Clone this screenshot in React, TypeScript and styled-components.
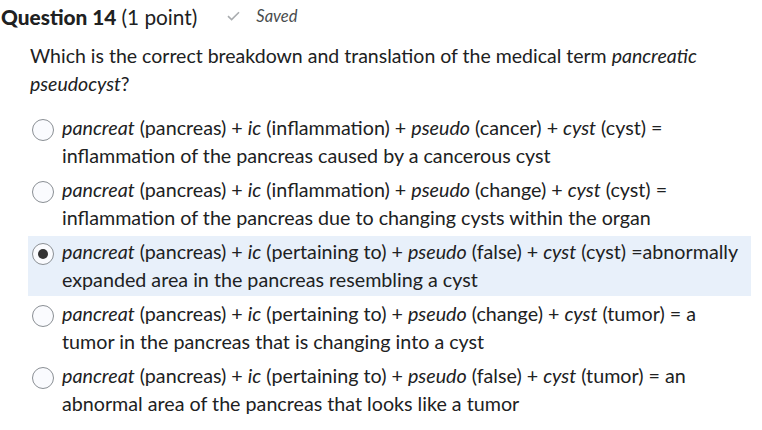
import React from 'react';
import styled, { createGlobalStyle } from 'styled-components';

const GlobalStyle = createGlobalStyle`
  body {
    margin: 0;
    background: #ffffff;
    font-family: Lato, "Open Sans", sans-serif;
    color: #202122;
  }
`

const Page = styled.div`
  padding: 2px 0 0 1px;
`

const Header = styled.div`
  display: flex;
  align-items: center;
  height: 28px;
`

const Title = styled.h2`
  margin: 0;
  font-size: 20.8px;
  font-weight: 700;
  b + span {
    font-weight: 400;
  }
`

const SavedTag = styled.span`
  display: flex;
  align-items: center;
  gap: 16px;
  margin-left: 30px;
  font-size: 16.5px;
  font-style: italic;
  color: #494c4e;
`

const Question = styled.p`
  margin: 12px 0 0 29px;
  font-size: 19.5px;
  line-height: 28px;
  width: 710px;
`

const Options = styled.div`
  display: flex;
  flex-direction: column;
  gap: 2px;
  margin: 14px 0 0 27px;
  width: 723px;
`

const Option = styled.label<{ $selected?: boolean }>`
  display: flex;
  align-items: flex-start;
  gap: 8px;
  padding: 2px 4px;
  background: ${p => (p.$selected ? '#e8f0fa' : 'transparent')};
`

const Radio = styled.span<{ $checked?: boolean }>`
  flex: none;
  width: 20px;
  height: 20px;
  margin-top: 5px;
  border: 1px solid #8a8f94;
  border-radius: 50%;
  background: #fafbfe;
  display: flex;
  align-items: center;
  justify-content: center;
  &::after {
    content: '';
    width: 10px;
    height: 10px;
    border-radius: 50%;
    background: ${p => (p.$checked ? '#333333' : 'transparent')};
  }
`

const OptionText = styled.span`
  font-size: 19.7px;
  line-height: 28px;
`

const options = [
  {
    parts: ['pancreatic', 'inflammation', 'cancer', 'cyst'],
    tail: ' (cyst) = inflammation of the pancreas caused by a cancerous cyst',
  },
  {
    parts: ['pancreatic', 'inflammation', 'change', 'cyst'],
    tail: ' (cyst) = inflammation of the pancreas due to changing cysts within the organ',
  },
  {
    parts: ['pancreatic', 'pertaining to', 'false', 'cyst'],
    tail: ' (cyst) =abnormally expanded area in the pancreas resembling a cyst',
    selected: true,
  },
  {
    parts: ['pancreatic', 'pertaining to', 'change', 'cyst'],
    tail: ' (tumor) = a tumor in the pancreas that is changing into a cyst',
  },
  {
    parts: ['pancreatic', 'pertaining to', 'false', 'cyst'],
    tail: ' (tumor) = an abnormal area of the pancreas that looks like a tumor',
  },
]

const Check = () => (
  <svg width="13" height="10" viewBox="0 0 13 10">
    <path d="M1 5.2 L4.6 8.6 L12 1.2" fill="none" stroke="#a9acaf" strokeWidth="1.6" />
  </svg>
)

const App: React.FC = () => {
  return (
    <Page>
      <GlobalStyle />
      <Header>
        <Title>
          <b>Question 14</b> <span>(1 point)</span>
        </Title>
        <SavedTag>
          <Check />
          Saved
        </SavedTag>
      </Header>
      <Question>
        Which is the correct breakdown and translation of the medical term <i>pancreatic pseudocyst</i>?
      </Question>
      <Options>
        {options.map((o, i) => (
          <Option key={i} $selected={o.selected}>
            <Radio $checked={o.selected} />
            <OptionText>
              <i>pancreat</i> (pancreas) + <i>ic</i> ({o.parts[1]}) + <i>pseudo</i> ({o.parts[2]}) + <i>cyst</i>
              {o.tail}
            </OptionText>
          </Option>
        ))}
      </Options>
    </Page>
  )
}

export default App
